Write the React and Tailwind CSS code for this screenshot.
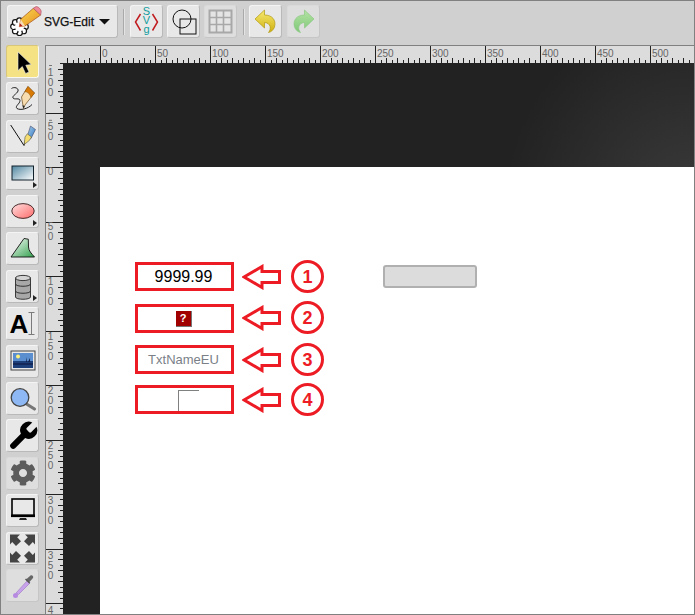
import React from 'react';
import { FaCog } from 'react-icons/fa';

const H_LABELS = [0, 50, 100, 150, 200, 250, 300, 350, 400, 450, 500];
const V_LABELS = [-100, -50, 0, 50, 100, 150, 200, 250, 300, 350, 400];

const range = (n) => Array.from({ length: n }, (_, i) => i);

// top ruler, x origin is 63 in page coords
const TopRuler = () => (
  <svg width="631" height="17" className="block font-['Liberation_Sans',sans-serif]">
    {range(116).map((i) => {
      const x = Math.round(37 + (i - 6) * 5.5) + 0.5;
      const major = (i - 6) % 10 === 0;
      const h = major ? 17 : i % 2 === 0 ? 5 : 3;
      return <line key={i} x1={x} x2={x} y1={17 - h} y2={17} stroke="#222" strokeWidth="1" />;
    })}
    {H_LABELS.map((n, i) => (
      <text key={n} x={39 + i * 55} y={11} fontSize="10" fill="#666">{n}</text>
    ))}
  </svg>
);

// left ruler, y origin is 63 in page coords
const LeftRuler = () => (
  <svg width="17" height="551" className="block font-['Liberation_Sans',sans-serif]">
    {range(102).map((i) => {
      const y = Math.round(104 + (i - 20) * 5.45) + 0.5;
      const major = (i - 20) % 10 === 0;
      const w = major ? 17 : i % 2 === 0 ? 5 : 3;
      return <line key={i} y1={y} y2={y} x1={17 - w} x2={17} stroke="#222" strokeWidth="1" />;
    })}
    {V_LABELS.map((n, i) => {
      const major = -6 + i * 54.8;
      return String(n).split('').map((c, j) => {
        const base = major + 8.5 + j * 10;
        if (c === '-') return <rect key={n + 'm'} x={3} y={major + 8} width={3} height={1} fill="#777" />;
        if (base > 555) return null;
        return (
          <text key={n + '-' + j} x={4.5} y={base} fontSize="10" textAnchor="middle" fill="#666">{c}</text>
        );
      });
    })}
  </svg>
);

const Flyout = () => (
  <svg width="4" height="6" className="absolute right-[1px] bottom-[1px]"><path d="M0 0L4 3L0 6Z" fill="#222" /></svg>
);

const ToolBtn = ({ children, selected, disabled, flyout }) => (
  <div
    className={`relative shrink-0 h-[33px] w-[33px] rounded-[3px] border flex items-center justify-center ${
      selected
        ? 'bg-[#f4e284] border-t-[#d8c67a] border-l-[#d8c67a] border-b-[#f8f8f0] border-r-[#f8f8f0]'
        : disabled
          ? 'bg-[#dedede] border-t-[#dadada] border-l-[#dadada] border-b-[#c6c6c6] border-r-[#c6c6c6]'
          : 'bg-[#e8e8e8] border-t-[#f4f4f4] border-l-[#f4f4f4] border-b-[#b9b9b9] border-r-[#b9b9b9]'
    }`}
  >
    {children}
    {flyout && <Flyout />}
  </div>
);

const Icon = ({ children }) => (
  <svg width="31" height="31" viewBox="1 1 31 31" className="block">{children}</svg>
);

const Sep = () => <div className="w-[2px] h-[26px] bg-[#aaaaaa] border-r border-[#e4e4e4] shrink-0" />;

const PETALS = [0, 45, 90, 135, 180, 225, 270, 315];

const Logo = () => (
  <svg width="36" height="31" viewBox="0 0 36 31" className="block">
    <defs>
      <linearGradient id="pencilBody" x1="0" y1="0" x2="1" y2="1">
        <stop offset="0" stopColor="#f8dc50" />
        <stop offset="1" stopColor="#e88a20" />
      </linearGradient>
    </defs>
    {PETALS.map((a) => (
      <circle key={a} cx={11.5 + 6 * Math.cos((a * Math.PI) / 180)} cy={20.7 + 6 * Math.sin((a * Math.PI) / 180)} r="2.8" fill="#fff" stroke="#111" strokeWidth="1.2" />
    ))}
    <circle cx="11.5" cy="20.7" r="4.6" fill="#fff" />
    <path d="M11.3 20.7L12.7 13.3L25.3 2.3L32.7 9L17 20Z" fill="url(#pencilBody)" stroke="#a8501a" strokeWidth="0.7" />
    <path d="M11.3 20.7L12.7 13.3L17 20Z" fill="#f6dcb8" />
    <path d="M11.3 20.7L11.9 17.2L14.5 20Z" fill="#b01818" />
    <path d="M25.3 2.3L28 0.6C30 0.2 33.4 3.6 33.2 5.8L32.7 9Z" fill="#ee8a9a" stroke="#a85060" strokeWidth="0.6" />
  </svg>
);

const Cursor = () => (
  <Icon>
    <path d="M12 7V25.5L16.3 21.5L19.6 28.5L23 27L19.8 20.2L25.2 19.6Z" fill="#000" stroke="#eee" strokeWidth="0.6" />
  </Icon>
);

const Pencil = () => (
  <Icon>
    <path d="M5.5 6.5C8 4.5 13 6 12 9C11 12 6 13.5 7 16C8 18 14 15.5 14 18.5C14 22 8.5 24 11 26.5C14 28.5 22 27 26 22.5" fill="none" stroke="#222" strokeWidth="1" />
    <path d="M15.5 15L22 4.5L28.5 11L19 23L17.5 26.5Z" fill="#f6dcae" stroke="#6a4a20" strokeWidth="0.7" />
    <path d="M18.8 9.6L22 4.5L28.5 11L25 15.5C24 12 22 10 18.8 9.6Z" fill="#d97a06" stroke="#8a4a00" strokeWidth="0.5" />
    <path d="M16.4 23.2L18.7 24L17.5 26.5Z" fill="#222" />
  </Icon>
);

const Pen = () => (
  <Icon>
    <defs>
      <linearGradient id="penBlue" x1="0" y1="0" x2="1" y2="1">
        <stop offset="0" stopColor="#a8cdec" />
        <stop offset="1" stopColor="#2f78c0" />
      </linearGradient>
    </defs>
    <path d="M4.7 5L18 25.5L20 18" fill="none" stroke="#111" strokeWidth="1" />
    <path d="M21.5 15.5L24.5 6L29.5 9.5L25 18.5Z" fill="url(#penBlue)" stroke="#335" strokeWidth="0.5" />
    <path d="M19 17L21.3 13.8L25.5 17L23.5 20.3L18.2 24.5Z" fill="#f3dc70" stroke="#554" strokeWidth="0.6" />
  </Icon>
);

const RectIcon = () => (
  <Icon>
    <defs>
      <linearGradient id="rectFill" x1="0" y1="0" x2="1" y2="1">
        <stop offset="0" stopColor="#4f86a0" />
        <stop offset="1" stopColor="#ffffff" />
      </linearGradient>
    </defs>
    <rect x="6" y="9" width="21.5" height="14" fill="url(#rectFill)" stroke="#12222c" strokeWidth="1" />
  </Icon>
);

const EllipseIcon = () => (
  <Icon>
    <defs>
      <linearGradient id="ellFill" x1="0" y1="0" x2="1" y2="1">
        <stop offset="0" stopColor="#ffe0e0" />
        <stop offset="1" stopColor="#ff6a6a" />
      </linearGradient>
    </defs>
    <ellipse cx="17" cy="16" rx="11.2" ry="7.4" fill="url(#ellFill)" stroke="#331a1a" strokeWidth="0.9" />
  </Icon>
);

const PolyIcon = () => (
  <Icon>
    <defs>
      <linearGradient id="polyFill" x1="0" y1="0" x2="1" y2="1">
        <stop offset="0" stopColor="#ffffff" />
        <stop offset="1" stopColor="#2fa04a" />
      </linearGradient>
    </defs>
    <path d="M5 25L18 6.5L22.3 7.2L22.5 15C22.8 19 25 21 28.5 25Z" fill="url(#polyFill)" stroke="#111" strokeWidth="0.9" />
  </Icon>
);

const DbIcon = () => (
  <Icon>
    <path d="M9.5 8V27C9.5 30 24.5 30 24.5 27V8Z" fill="#a8a8a8" stroke="#3a3a3a" strokeWidth="1" />
    <ellipse cx="17" cy="8" rx="7.5" ry="2.6" fill="#d4d4d4" stroke="#3a3a3a" strokeWidth="1" />
    <path d="M9.5 14C9.5 17 24.5 17 24.5 14M9.5 21C9.5 24 24.5 24 24.5 21" fill="none" stroke="#333" strokeWidth="1" />
  </Icon>
);

const TextIcon = () => (
  <div className="flex items-center">
    <span className="font-['Liberation_Sans',sans-serif] font-bold text-[26px] leading-none text-black">A</span>
    <svg width="7" height="23" className="block">
      <path d="M0.5 0.5H6.5M3.5 0.5V22.5M0.5 22.5H6.5" stroke="#7a7a7a" strokeWidth="1" fill="none" />
    </svg>
  </div>
);

const ImageIcon = () => (
  <Icon>
    <rect x="5" y="6" width="24" height="19" fill="#e8e8e8" stroke="#444" strokeWidth="1" />
    <rect x="7" y="8" width="20" height="15" fill="#1d3f7a" />
    <rect x="7" y="8" width="20" height="8" fill="#5a8ecf" />
    <rect x="7" y="18" width="20" height="2" fill="#14285a" />
    <circle cx="12" cy="11.5" r="2" fill="#fff27a" />
    <path d="M20 17L21 12V17ZM22 17L24 13V17Z" fill="#14224a" />
  </Icon>
);

const ZoomIcon = () => (
  <Icon>
    <path d="M20.5 22L28.5 27" stroke="#777" strokeWidth="3.2" strokeLinecap="round" />
    <circle cx="14" cy="15.5" r="8.8" fill="#8db8f4" stroke="#444" strokeWidth="1.3" />
  </Icon>
);

const WrenchIcon = () => (
  <svg width="30" height="30" viewBox="1.5 1.5 21 21" className="block">
    <path d="M14.7 6.3a1 1 0 0 0 0 1.4l1.6 1.6a1 1 0 0 0 1.4 0l3.77-3.77a6 6 0 0 1-7.94 7.94l-6.91 6.91a2.12 2.12 0 0 1-3-3l6.91-6.91a6 6 0 0 1 7.94-7.94l-3.76 3.76z" fill="#000" />
  </svg>
);

const MonitorIcon = () => (
  <Icon>
    <rect x="6" y="5" width="22" height="16.5" fill="#e8e8e8" stroke="#000" strokeWidth="1.6" />
    <rect x="5" y="20.5" width="24" height="2.6" fill="#000" />
    <path d="M14 24H20L21 26H13Z" fill="#222" />
  </Icon>
);

const FitArrow = ({ transform }) => (
  <path transform={transform} d="M4 2.5H14L11.2 5.3L15 9.2L10 14L6.2 10L4 12.5Z" fill="#444" />
);

const FitIcon = () => (
  <Icon>
    <FitArrow />
    <FitArrow transform="translate(33 0) scale(-1 1)" />
    <FitArrow transform="translate(0 33) scale(1 -1)" />
    <FitArrow transform="translate(33 33) scale(-1 -1)" />
  </Icon>
);

const DropperIcon = () => (
  <Icon>
    <path d="M10 24L21 12L23.5 14.5L12.5 25.5Z" fill="#c7a2ea" stroke="#a888cc" strokeWidth="0.8" />
    <circle cx="9.5" cy="26.5" r="2.5" fill="#b58ae0" />
    <path d="M20 10.5L24.5 6.5C26 5.5 28 7.5 27 9L23 13.5Z" fill="#666" />
    <path d="M19.5 10L23.8 14.3" stroke="#555" strokeWidth="1.4" />
  </Icon>
);

const SvgIcon = () => (
  <div className="relative w-[31px] h-[31px]">
    <svg width="31" height="31" className="block">
      <path d="M9.5 8L4.5 16L9.5 24.5M21.5 8L26.5 16L21.5 24.5" fill="none" stroke="#c01c20" strokeWidth="1.5" />
    </svg>
    <div className="absolute left-0 right-0 top-[1px] flex flex-col items-center font-['Liberation_Sans',sans-serif] text-[11px] leading-[9px] text-[#0f9c9c]">
      <span>S</span>
      <span>V</span>
      <span>g</span>
    </div>
  </div>
);

const WireIcon = () => (
  <Icon>
    <rect x="13" y="14" width="16" height="15" fill="none" stroke="#111" strokeWidth="1" />
    <circle cx="15" cy="14" r="9" fill="none" stroke="#111" strokeWidth="1" />
  </Icon>
);

const GridIcon = () => (
  <Icon>
    <rect x="5.5" y="5.5" width="22" height="22" fill="#e4e4e4" stroke="#a8a8a8" strokeWidth="2" />
    <path d="M12.5 5V28M19.5 5V28M5 12.5H28M5 19.5H28" stroke="#a8a8a8" strokeWidth="1.6" />
  </Icon>
);

const UndoIcon = ({ flip, id, from, to, line }) => (
  <Icon>
    <defs>
      <linearGradient id={id} x1="0" y1="0" x2="0" y2="1">
        <stop offset="0" stopColor={from} />
        <stop offset="1" stopColor={to} />
      </linearGradient>
    </defs>
    <g transform={flip ? 'translate(33 0) scale(-1 1)' : undefined}>
      <path d="M6 14L15.5 5V10C23 10 27.5 15 25.5 22C24.5 25 22 27 19.5 27.5C22.5 24 22 18 15.5 17.5V23Z" fill={`url(#${id})`} stroke={line} strokeWidth="0.7" />
    </g>
  </Icon>
);

// red call-out: box, arrow and numbered circle
const Callout = ({ n, rowClass, boxClass, children }) => (
  <div className={`flex items-center h-[33px] ${rowClass || ''}`}>
    <div className={`w-[99px] h-[29px] border-[3px] border-[#ed1c24] flex items-center justify-center bg-white ${boxClass || ''}`}>
      {children}
    </div>
    <svg width="39" height="26" className="block ml-[8px] mr-[10px]">
      <path d="M2 13L20 2.5V7.5H37.5V18.5H20V23.5Z" fill="#fff" stroke="#ed1c24" strokeWidth="3" />
    </svg>
    <div className="w-[33px] h-[33px] rounded-full border-[3px] border-[#ed1c24] flex items-center justify-center font-['Liberation_Sans',sans-serif] font-bold text-[18px] leading-none text-[#ed1c24]">
      {n}
    </div>
  </div>
);

export default function App() {
  return (
    <div className="w-[695px] h-[615px] border border-[#808080] bg-[#d0d0d0] flex flex-col overflow-hidden font-['Liberation_Sans',sans-serif]">
      {/* top toolbar */}
      <div className="h-[44px] shrink-0 flex items-start pl-[6px] pt-[4px]">
        <div className="flex items-center h-[33px] w-[111px] rounded-[3px] border bg-[#e8e8e8] border-t-[#f4f4f4] border-l-[#f4f4f4] border-b-[#b9b9b9] border-r-[#b9b9b9] shrink-0">
          <div className="w-[36px] shrink-0"><Logo /></div>
          <span className="text-[12px] text-[#111] [-webkit-text-stroke:0.25px_#111]">SVG-Edit</span>
          <svg width="11" height="6" className="ml-[5px] block"><path d="M0 0H11L5.5 5.5Z" fill="#111" /></svg>
        </div>
        <div className="ml-[5px] mr-[5px] mt-[4px]"><Sep /></div>
        <div className="flex gap-[4px]">
          <ToolBtn><SvgIcon /></ToolBtn>
          <ToolBtn><WireIcon /></ToolBtn>
          <ToolBtn disabled><GridIcon /></ToolBtn>
        </div>
        <div className="ml-[6px] mr-[4px] mt-[4px]"><Sep /></div>
        <div className="flex gap-[5px]">
          <ToolBtn><UndoIcon id="undoFill" from="#f6ea70" to="#d0b010" line="#b09a10" /></ToolBtn>
          <ToolBtn disabled><UndoIcon id="redoFill" flip from="#b4e2a4" to="#7fc878" line="#8cc884" /></ToolBtn>
        </div>
      </div>

      <div className="flex flex-1 min-h-0">
        {/* left tools */}
        <div className="w-[44px] shrink-0 flex flex-col pl-[5px] gap-[4.45px]">
          <ToolBtn selected><Cursor /></ToolBtn>
          <ToolBtn><Pencil /></ToolBtn>
          <ToolBtn><Pen /></ToolBtn>
          <ToolBtn flyout><RectIcon /></ToolBtn>
          <ToolBtn flyout><EllipseIcon /></ToolBtn>
          <ToolBtn><PolyIcon /></ToolBtn>
          <ToolBtn flyout><DbIcon /></ToolBtn>
          <ToolBtn><TextIcon /></ToolBtn>
          <ToolBtn><ImageIcon /></ToolBtn>
          <ToolBtn><ZoomIcon /></ToolBtn>
          <ToolBtn><WrenchIcon /></ToolBtn>
          <ToolBtn disabled><FaCog className="text-[#5c5c5c] w-[26px] h-[26px]" /></ToolBtn>
          <ToolBtn><MonitorIcon /></ToolBtn>
          <ToolBtn><FitIcon /></ToolBtn>
          <ToolBtn disabled><DropperIcon /></ToolBtn>
        </div>

        {/* work area */}
        <div className="flex-1 min-w-0 flex flex-col border-l border-t border-[#808080]">
          <div className="h-[17px] shrink-0 flex bg-[#dcdcdc]">
            <div className="w-[17px] shrink-0" />
            <TopRuler />
          </div>
          <div className="flex flex-1 min-h-0">
            <div className="w-[17px] shrink-0 bg-[#dcdcdc] overflow-hidden"><LeftRuler /></div>
            <div className="flex-1 min-w-0 flex flex-col pt-[104px] pl-[37px] bg-[radial-gradient(circle_at_100%_25%,#3a3a3a_0px,#222222_190px)]">
              {/* page */}
              <div className="relative flex-1 bg-white pt-[93px] pl-[35px]">
                <Callout n="1">
                  <span className="text-[16px] leading-none text-black -translate-x-px">9999.99</span>
                </Callout>
                <Callout n="2" rowClass="mt-[8px]" boxClass="translate-y-[1px]">
                  <span className="w-[16px] h-[16px] bg-[#a00000] border-r border-b border-[#777] flex items-center justify-center text-white font-bold text-[11px] leading-none -translate-x-px">?</span>
                </Callout>
                <Callout n="3" rowClass="mt-[9px]">
                  <span className="text-[13px] leading-none text-[#7a7f88] -translate-x-px">TxtNameEU</span>
                </Callout>
                <Callout n="4" rowClass="mt-[7px]">
                  <span className="block w-[21px] h-[21px] border-l border-t border-[#808080] translate-x-[4px] translate-y-[1px]" />
                </Callout>
                <div className="absolute left-[283px] top-[98px] w-[94px] h-[23px] rounded-[3px] bg-[#dcdcdc] border-2 border-[#b0b0b0]" />
              </div>
            </div>
          </div>
        </div>
      </div>
    </div>
  );
}
